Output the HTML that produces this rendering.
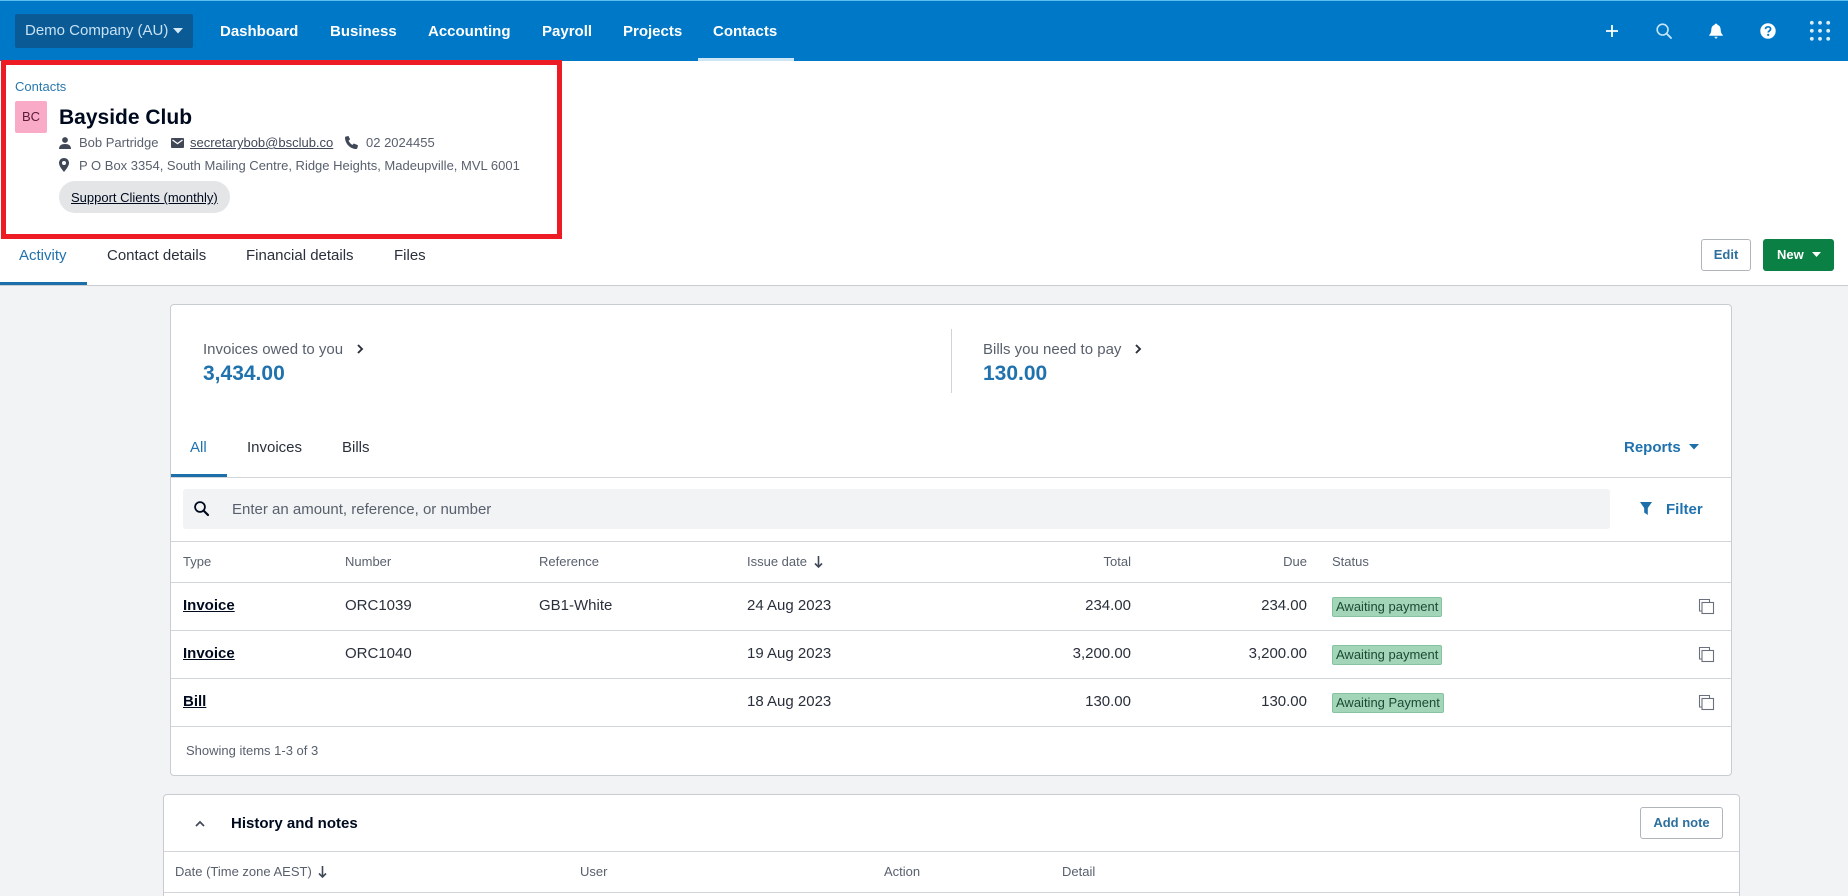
<!DOCTYPE html>
<html lang="en">
<head>
<meta charset="utf-8">
<title>Bayside Club</title>
<style>
html,body{margin:0;padding:0;background:#f2f3f4;}
#p{position:relative;width:1848px;height:896px;overflow:hidden;background:#f2f3f4;font-family:"Liberation Sans",Arial,sans-serif;color:#000a1e;}
.t{position:absolute;white-space:nowrap;line-height:20px;height:20px;}
.b{position:absolute;box-sizing:border-box;}
.n{font-size:15px;font-weight:700;color:#fff;top:22px;}
.h{font-size:13px;color:#59606d;}
.r{font-size:15px;color:#2a303b;}
.l{font-size:15px;font-weight:700;text-decoration:underline;color:#000a1e;}
.s{font-size:13px;color:#59606d;}
.ln{position:absolute;height:1px;background:#d2d5d9;}
.bd{position:absolute;box-sizing:border-box;height:20px;line-height:18px;font-size:13px;background:#a3d5b8;border:1px solid #86c3a0;border-radius:2px;color:#1d4a35;padding:0 3px;white-space:nowrap;left:1332px;}
svg{position:absolute;display:block;overflow:visible;}
.bl{color:#1f72ae;}
</style>
</head>
<body>
<div id="p">
  <!-- Nav -->
  <div class="b" style="left:0;top:0;width:1848px;height:61px;background:#0078c8;"></div>
  <div class="b" style="left:0;top:0;width:1848px;height:1px;background:#5cc0ee;"></div>
  <div class="b" style="left:15px;top:14px;width:178px;height:34px;background:#0a5a96;border-radius:2px;"></div>
  <div class="t" style="left:25px;top:21px;font-size:15px;color:#c6e2f4;">Demo Company (AU)</div>
  <svg style="left:173px;top:28px" width="10" height="6"><path d="M0 0h10L5 5.500z" fill="#d5eaf7"/></svg>
  <div class="t n" style="left:220px;">Dashboard</div>
  <div class="t n" style="left:330px;">Business</div>
  <div class="t n" style="left:428px;">Accounting</div>
  <div class="t n" style="left:542px;">Payroll</div>
  <div class="t n" style="left:623px;">Projects</div>
  <div class="t n" style="left:713px;">Contacts</div>
  <div class="b" style="left:698px;top:58px;width:96px;height:3px;background:#cde6f5;"></div>

  <svg style="left:1606px;top:25px" width="12" height="12"><path d="M6 0v12M0 6h12" stroke="#fff" stroke-width="1.800"/></svg>
  <svg style="left:1656px;top:23px" width="16" height="16"><circle cx="6.600" cy="6.600" r="5.400" fill="none" stroke="#c5e6f7" stroke-width="1.600"/><path d="M10.600 10.600L15 15" stroke="#c5e6f7" stroke-width="1.900" stroke-linecap="round"/></svg>
  <svg style="left:1709px;top:23px" width="14" height="16"><path d="M7 .6c.9 0 1.400.6 1.500 1.300C10.800 2.600 11.600 4.700 11.700 6.800c.1 2.600.7 3.900 2.100 5.200v.7H.2V12c1.400-1.300 2-2.600 2.100-5.200.1-2.100.9-4.200 3.200-4.900C5.600 1.200 6.100.6 7 .6z" fill="#fff"/><path d="M5.500 13.800h3C8.400 15 7.800 15.600 7 15.600S5.600 15 5.500 13.800z" fill="#cfe9f8"/></svg>
  <svg style="left:1760px;top:23px" width="16" height="16"><circle cx="8" cy="8" r="7.700" fill="#fff"/><path d="M5.500 6.200C5.600 4.700 6.600 3.800 8.100 3.800c1.500 0 2.500.9 2.500 2.100 0 1-.5 1.500-1.300 2-.7.5-1 .8-1 1.600" fill="none" stroke="#0078c8" stroke-width="1.700"/><circle cx="8.200" cy="11.900" r="1.100" fill="#0078c8"/></svg>
  <svg style="left:1809px;top:20px" width="22" height="22" fill="#d8eef9"><circle cx="2.800" cy="2.800" r="1.900"/><circle cx="11" cy="2.800" r="1.900"/><circle cx="19.200" cy="2.800" r="1.900"/><circle cx="2.800" cy="10.800" r="1.900"/><circle cx="11" cy="10.800" r="1.900"/><circle cx="19.200" cy="10.800" r="1.900"/><circle cx="2.800" cy="18.800" r="1.900"/><circle cx="11" cy="18.800" r="1.900"/><circle cx="19.200" cy="18.800" r="1.900"/></svg>

  <!-- Header white -->
  <div class="b" style="left:0;top:61px;width:1848px;height:224px;background:#fff;"></div>
  <div class="b" style="left:1px;top:60px;width:561px;height:179px;border:5px solid #ed1c24;"></div>

  <div class="t" style="left:15px;top:77px;font-size:13px;color:#2a78ad;">Contacts</div>
  <div class="b" style="left:15px;top:101px;width:32px;height:32px;background:#f9aac6;border-radius:2px;text-align:center;line-height:32px;font-size:13px;color:#5c1b38;">BC</div>
  <div class="t" style="left:59px;top:108px;font-size:21px;font-weight:700;color:#000a1e;">Bayside Club</div>

  <svg style="left:59px;top:137px" width="12" height="12" fill="#404756"><circle cx="6" cy="3" r="2.900"/><path d="M0 12c0-3.600 2.400-5 6-5s6 1.400 6 5z"/></svg>
  <div class="t s" style="left:79px;top:133px;">Bob Partridge</div>
  <svg style="left:171px;top:138px" width="13" height="10"><rect width="13" height="10" rx="1" fill="#404756"/><path d="M1.500 2l5 3.600 5-3.600" fill="none" stroke="#fff" stroke-width="1.300"/></svg>
  <div class="t s" style="left:190px;top:133px;text-decoration:underline;color:#404756;">secretarybob@bsclub.co</div>
  <svg style="left:345px;top:136px" width="13" height="13"><path d="M1 .5L3.500 0l1.600 3.400-1.500 1.200c.6 1.700 2 3.300 3.900 4.300l1.300-1.400L13 9.300l-.6 2.700c-.2.600-.6 1-1.300 1C5 12.700.2 7.600 0 1.700 0 1.100.4.700 1 .5z" fill="#404756"/></svg>
  <div class="t s" style="left:366px;top:133px;">02 2024455</div>
  <svg style="left:59px;top:158px" width="10" height="14"><path fill-rule="evenodd" d="M5 0c2.800 0 5 2.100 5 4.900C10 8.200 6.700 11.800 5 14 3.300 11.800 0 8.200 0 4.900 0 2.100 2.200 0 5 0zm0 3a2 2 0 100 4 2 2 0 000-4z" fill="#404756"/></svg>
  <div class="t s" style="left:79px;top:156px;">P O Box 3354, South Mailing Centre, Ridge Heights, Madeupville, MVL 6001</div>
  <div class="b" style="left:59px;top:181px;width:171px;height:32px;background:#e4e5e7;border-radius:16px;"></div>
  <div class="t" style="left:71px;top:188px;font-size:13px;color:#000a1e;text-decoration:underline;">Support Clients (monthly)</div>

  <!-- Tabs -->
  <div class="t bl" style="left:19px;top:246px;font-size:15px;">Activity</div>
  <div class="t" style="left:107px;top:246px;font-size:15px;color:#2a303b;">Contact details</div>
  <div class="t" style="left:246px;top:246px;font-size:15px;color:#2a303b;">Financial details</div>
  <div class="t" style="left:394px;top:246px;font-size:15px;color:#2a303b;">Files</div>
  <div class="b" style="left:0;top:285px;width:1848px;height:1px;background:#c9ccd0;"></div>
  <div class="b" style="left:0;top:282px;width:87px;height:3px;background:#1c6fa8;"></div>

  <div class="b" style="left:1701px;top:239px;width:50px;height:32px;background:#fff;border:1px solid #b0b5bb;border-radius:3px;text-align:center;line-height:29px;font-size:13px;font-weight:700;color:#2d6f9e;">Edit</div>
  <div class="b" style="left:1763px;top:239px;width:71px;height:32px;background:#0a8044;border-radius:3px;"></div>
  <div class="t" style="left:1777px;top:245px;font-size:13px;font-weight:700;color:#fff;">New</div>
  <svg style="left:1812px;top:252px" width="9" height="6"><path d="M0 0h9L4.500 5z" fill="#fff"/></svg>

  <!-- Main card -->
  <div class="b" style="left:170px;top:304px;width:1562px;height:472px;background:#fff;border:1px solid #c9ccd0;border-radius:4px;"></div>
  <div class="t" style="left:203px;top:339px;font-size:15px;color:#59606d;transform:translateY(1px);">Invoices owed to you</div>
  <svg style="left:357px;top:344px" width="7" height="10"><path d="M1 1l4 4-4 4" fill="none" stroke="#2a303b" stroke-width="1.900"/></svg>
  <div class="t bl" style="left:203px;top:364px;font-size:21px;font-weight:700;">3,434.00</div>
  <div class="b" style="left:951px;top:329px;width:1px;height:64px;background:#cfd2d6;"></div>
  <div class="t" style="left:983px;top:340px;font-size:15px;color:#59606d;">Bills you need to pay</div>
  <svg style="left:1135px;top:344px" width="7" height="10"><path d="M1 1l4 4-4 4" fill="none" stroke="#2a303b" stroke-width="1.900"/></svg>
  <div class="t bl" style="left:983px;top:364px;font-size:21px;font-weight:700;">130.00</div>

  <div class="t bl" style="left:190px;top:438px;font-size:15px;">All</div>
  <div class="t" style="left:247px;top:438px;font-size:15px;color:#2a303b;">Invoices</div>
  <div class="t" style="left:342px;top:438px;font-size:15px;color:#2a303b;">Bills</div>
  <div class="ln" style="left:171px;top:477px;width:1560px;"></div>
  <div class="b" style="left:171px;top:474px;width:56px;height:3px;background:#1c6fa8;"></div>
  <div class="t bl" style="left:1624px;top:438px;font-size:15px;font-weight:700;">Reports</div>
  <svg style="left:1689px;top:444px" width="10" height="6"><path d="M0 0h10L5 5.500z" fill="#1c6fa8"/></svg>

  <div class="b" style="left:183px;top:489px;width:1427px;height:40px;background:#f2f3f4;border-radius:3px;"></div>
  <svg style="left:194px;top:501px" width="15" height="15"><circle cx="6" cy="6" r="4.900" fill="none" stroke="#000a1e" stroke-width="1.800"/><path d="M9.600 9.600L14 14" stroke="#000a1e" stroke-width="2.200" stroke-linecap="round"/></svg>
  <div class="t" style="left:232px;top:500px;font-size:15px;color:#59606d;">Enter an amount, reference, or number</div>
  <svg style="left:1640px;top:502px" width="12" height="13"><path d="M0 0h12L7.800 6v7L4.200 10.500V6z" fill="#1c6fa8"/></svg>
  <div class="t bl" style="left:1666px;top:500px;font-size:15px;font-weight:700;">Filter</div>

  <div class="ln" style="left:171px;top:541px;width:1560px;"></div>
  <div class="t h" style="left:183px;top:552px;">Type</div>
  <div class="t h" style="left:345px;top:552px;">Number</div>
  <div class="t h" style="left:539px;top:552px;">Reference</div>
  <div class="t h" style="left:747px;top:552px;">Issue date</div>
  <svg style="left:814px;top:556px" width="9" height="12"><path d="M4.500 0v11M1 7.500l3.500 3.500L8 7.500" fill="none" stroke="#404756" stroke-width="1.600"/></svg>
  <div class="t h" style="right:717px;top:552px;">Total</div>
  <div class="t h" style="right:541px;top:552px;">Due</div>
  <div class="t h" style="left:1332px;top:552px;">Status</div>
  <div class="ln" style="left:171px;top:582px;width:1560px;"></div>

  <div class="t l" style="left:183px;top:596px;">Invoice</div>
  <div class="t r" style="left:345px;top:596px;">ORC1039</div>
  <div class="t r" style="left:539px;top:596px;">GB1-White</div>
  <div class="t r" style="left:747px;top:596px;">24 Aug 2023</div>
  <div class="t r" style="right:717px;top:596px;">234.00</div>
  <div class="t r" style="right:541px;top:596px;">234.00</div>
  <div class="bd" style="top:597px;">Awaiting payment</div>
  <svg style="left:1699px;top:599px" width="15" height="15" fill="none" stroke="#6a717d" stroke-width="1.100"><path d="M2.500 12H.5V.5h10v2.500"/><rect x="3" y="3.500" width="11.500" height="11" fill="#fff"/></svg>
  <div class="ln" style="left:171px;top:630px;width:1560px;"></div>

  <div class="t l" style="left:183px;top:644px;">Invoice</div>
  <div class="t r" style="left:345px;top:644px;">ORC1040</div>
  <div class="t r" style="left:747px;top:644px;">19 Aug 2023</div>
  <div class="t r" style="right:717px;top:644px;">3,200.00</div>
  <div class="t r" style="right:541px;top:644px;">3,200.00</div>
  <div class="bd" style="top:645px;">Awaiting payment</div>
  <svg style="left:1699px;top:647px" width="15" height="15" fill="none" stroke="#6a717d" stroke-width="1.100"><path d="M2.500 12H.5V.5h10v2.500"/><rect x="3" y="3.500" width="11.500" height="11" fill="#fff"/></svg>
  <div class="ln" style="left:171px;top:678px;width:1560px;"></div>

  <div class="t l" style="left:183px;top:692px;">Bill</div>
  <div class="t r" style="left:747px;top:692px;">18 Aug 2023</div>
  <div class="t r" style="right:717px;top:692px;">130.00</div>
  <div class="t r" style="right:541px;top:692px;">130.00</div>
  <div class="bd" style="top:693px;">Awaiting Payment</div>
  <svg style="left:1699px;top:695px" width="15" height="15" fill="none" stroke="#6a717d" stroke-width="1.100"><path d="M2.500 12H.5V.5h10v2.500"/><rect x="3" y="3.500" width="11.500" height="11" fill="#fff"/></svg>
  <div class="ln" style="left:171px;top:726px;width:1560px;"></div>
  <div class="t s" style="left:186px;top:741px;">Showing items 1-3 of 3</div>

  <!-- History card -->
  <div class="b" style="left:163px;top:794px;width:1577px;height:120px;background:#fff;border:1px solid #c9ccd0;border-radius:4px;"></div>
  <svg style="left:195px;top:820px" width="10" height="7"><path d="M1 6l4-4 4 4" fill="none" stroke="#404756" stroke-width="1.700"/></svg>
  <div class="t" style="left:231px;top:814px;font-size:15px;font-weight:700;color:#000a1e;">History and notes</div>
  <div class="b" style="left:1640px;top:807px;width:83px;height:32px;background:#fff;border:1px solid #b0b5bb;border-radius:3px;text-align:center;line-height:29px;font-size:13px;font-weight:700;color:#2d6f9e;">Add note</div>
  <div class="ln" style="left:164px;top:851px;width:1575px;"></div>
  <div class="t h" style="left:175px;top:862px;">Date (Time zone AEST)</div>
  <svg style="left:318px;top:866px" width="9" height="12"><path d="M4.500 0v11M1 7.500l3.500 3.500L8 7.500" fill="none" stroke="#404756" stroke-width="1.600"/></svg>
  <div class="t h" style="left:580px;top:862px;">User</div>
  <div class="t h" style="left:884px;top:862px;">Action</div>
  <div class="t h" style="left:1062px;top:862px;">Detail</div>
  <div class="ln" style="left:164px;top:892px;width:1575px;"></div>
</div>
</body>
</html>
